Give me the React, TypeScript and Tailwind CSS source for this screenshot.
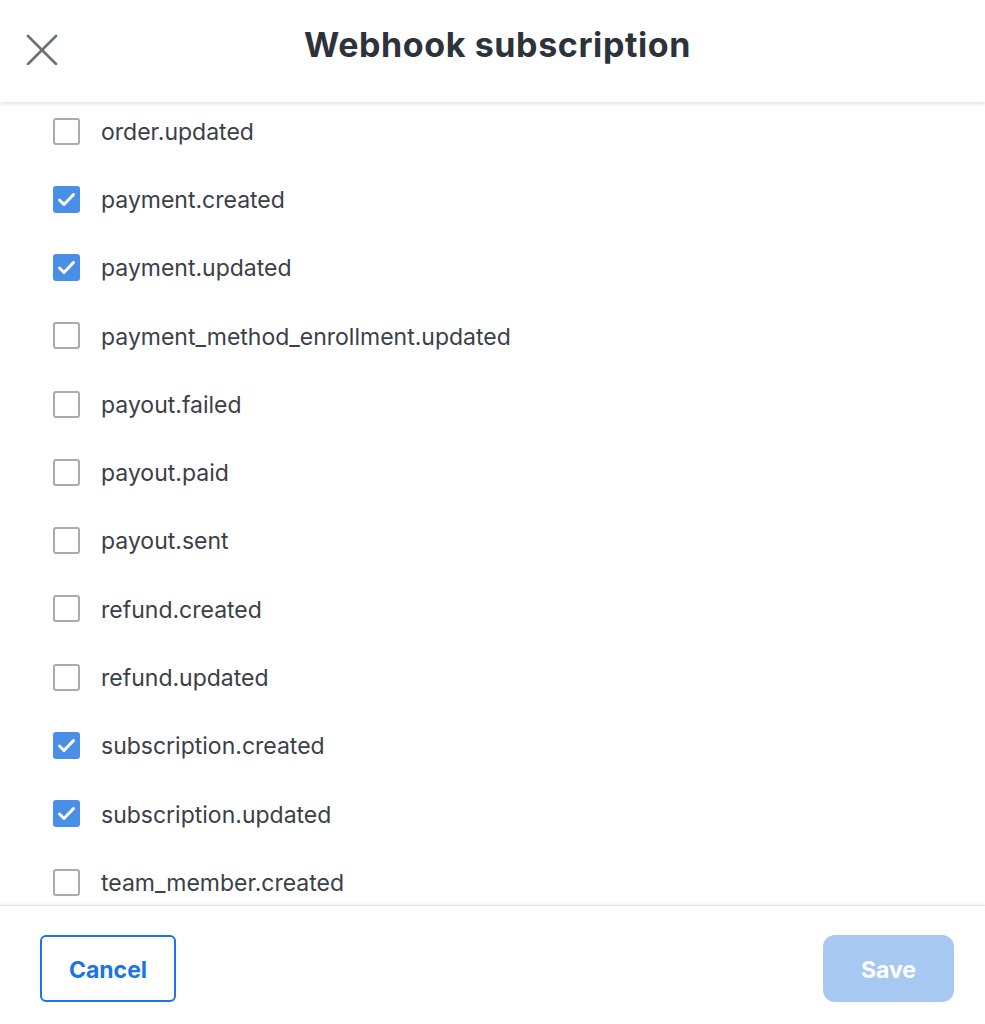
import React from "react";

const events = [
  { name: "order.updated", checked: false },
  { name: "payment.created", checked: true },
  { name: "payment.updated", checked: true },
  { name: "payment_method_enrollment.updated", checked: false },
  { name: "payout.failed", checked: false },
  { name: "payout.paid", checked: false },
  { name: "payout.sent", checked: false },
  { name: "refund.created", checked: false },
  { name: "refund.updated", checked: false },
  { name: "subscription.created", checked: true },
  { name: "subscription.updated", checked: true },
  { name: "team_member.created", checked: false },
];

function Checkbox({ checked }: { checked: boolean }) {
  if (checked) {
    return (
      <div className="w-[27px] h-[27px] rounded-[3px] bg-[#4a8fe7] flex items-center justify-center shrink-0">
        <svg width="27" height="27" viewBox="0 0 27 27" fill="none">
          <path d="M6.5 14l4.5 4.5 9.5-10" stroke="white" strokeWidth="3" strokeLinecap="round" strokeLinejoin="round" />
        </svg>
      </div>
    );
  }
  return <div className="w-[27px] h-[27px] rounded-[3px] border-[2.5px] border-[#a9abaf] bg-white shrink-0" />;
}

export default function App() {
  return (
    <div className="w-[985px] h-[1024px] bg-white flex flex-col overflow-hidden font-['Inter',sans-serif]">
      {/* Header */}
      <header className="relative z-10 h-[102px] shrink-0 flex items-center justify-center bg-white shadow-[0_2px_4px_rgba(0,0,0,0.12)]">
        <button className="absolute left-[26px] top-[33px] w-[32px] h-[32px] flex items-center justify-center">
          <svg width="32" height="32" viewBox="0 0 32 32" fill="none">
            <path d="M2 3l28 28M30 3L2 31" stroke="#6b7076" strokeWidth="2.6" strokeLinecap="round" />
          </svg>
        </button>
        <h1 className="text-[34px] font-bold text-[#2c333a] tracking-[0.6px] mt-[-14px] ml-[10px]">Webhook subscription</h1>
      </header>

      {/* List */}
      <div className="flex-1 overflow-hidden">
        <ul className="mt-[-5px]">
          {events.map((e) => (
            <li key={e.name} className="h-[68.27px] flex items-center pl-[53px] gap-[21px]">
              <Checkbox checked={e.checked} />
              <span className="text-[23px] text-[#3b4046] mt-[2px]">{e.name}</span>
            </li>
          ))}
        </ul>
      </div>

      {/* Footer */}
      <footer className="relative z-10 h-[119px] shrink-0 border-t border-[#e3e5e8] bg-white shadow-[0_-1px_3px_rgba(0,0,0,0.06)] flex items-start justify-between px-[40px] pt-[29px]">
        <button className="w-[136px] h-[67px] rounded-[6px] border-2 border-[#1a73e8] text-[#1a73e8] text-[23px] font-bold pt-[3px]">
          Cancel
        </button>
        <button className="w-[131px] h-[67px] mr-[-9px] rounded-[12px] bg-[#a6c8f1] text-white text-[23px] font-bold pt-[3px]">
          Save
        </button>
      </footer>
    </div>
  );
}
